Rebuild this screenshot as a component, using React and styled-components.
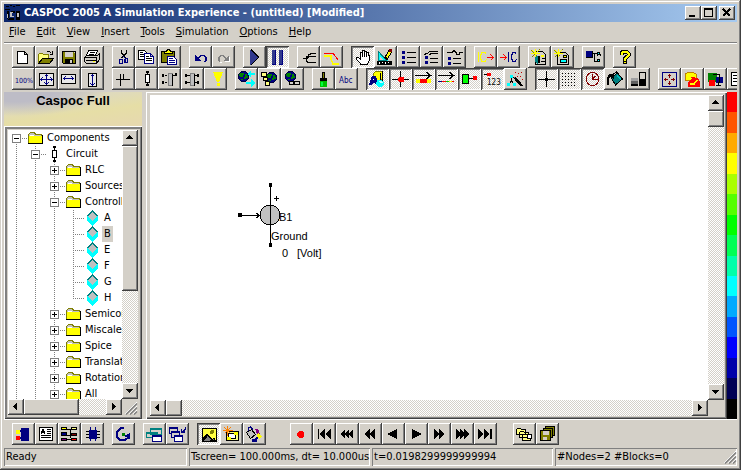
import React, { useState } from 'react';
import styled, { createGlobalStyle, css } from 'styled-components';

const FACE = '#d4d0c8';
const NAVY = '#000080';
const OLIVE = '#808000';
const STEEL = '#30388c';

const GlobalStyle = createGlobalStyle`
  * {
    box-sizing: border-box;
  }
  body {
    margin: 0;
    background: ${FACE};
    color: #000;
    font: 11px/16px 'DejaVu Sans Condensed', 'Liberation Sans', sans-serif;
  }
  button {
    margin: 0;
    padding: 0;
    border: 0;
    background: none;
    color: inherit;
    font: inherit;
  }
`;

const F = ({ c = '#000', d }) => <path d={d} fill={c} />;
const L = ({ c = '#000', d, w = 1, f = 'none' }) => (
  <path d={d} fill={f} stroke={c} strokeWidth={w} />
);
const Globe = ({ x = 4, y = 4 }) => (
  <g transform={`translate(${x} ${y})`}>
    <L c='#000040' f={NAVY} d='M3.5 .5h4l3 3v4l-3 3h-4l-3-3v-4z' />
    <F c='#008000' d='M2 2h4v2h-1v2h-3v-1h-1v-2h1zM7 3h2v2h1v2h-2v1h-2v-2h1zM3 8h2v1h-2z' />
  </g>
);
const Sparks = () => (
  <>
    <L c={OLIVE} d='M3.5 4.5l6 6M11.5 3.5l-8 8' />
    <L c='#ffff00' w={1.4} d='M7.5 3v8M3 7.5h9M4.5 4.5l3 3M10.5 4.5l-3 3' />
  </>
);
const Bullets = () => <F c={NAVY} d='M5 5h3v3h-3zM5 10h3v3h-3zM5 15h3v3h-3z' />;
const Disk = ({ d }) => <L c='#000' f={OLIVE} d={d} />;

// drawn on the 23x22 grid of a toolbar button
const icons = {
  new: <L f='#fff' d='M5.5 5.5h7l3 3v9h-10zM12.5 5.5v3h3' />,
  open: (
    <>
      <L c={OLIVE} f='#ffff80' d='M3.5 17.5v-9l1-1h3l1 1h5v4' />
      <L c='#000' f={OLIVE} d='M3.5 17.5l4-5h11l-4 5z' />
      <L d='M11.5 6.5l1-1h2l2 2M17.5 5v3.5h-3' />
    </>
  ),
  save: (
    <>
      <Disk d='M4.5 5.5h13v12h-12l-1-1z' />
      <F c={FACE} d='M7 6h8v5h-8zM16 6h1v1h-1z' />
      <F d='M7 13h8v4h-8z' />
      <F c={FACE} d='M12 14h2v3h-2z' />
    </>
  ),
  print: (
    <>
      <L f='#fff' d='M7.5 4.5h9l-2 5h-9z' />
      <L d='M9 6.5h5M8 8.5h5' />
      <L f={FACE} d='M3.5 11.5l2-2h11l2-2v6l-3 4h-10l-2-2z' />
      <F d='M3 11h13v1h-13zM5 14h10v1h-10zM15 12h1v6h-1z' />
      <F c='#ffff00' d='M12 15h2v1h-2z' />
    </>
  ),
  cut: (
    <>
      <L d='M9.5 4v3l4 5M14.5 4v3l-5 5' w={1.3} />
      <L c={NAVY} w={1.3} d='M10.5 11.5l1-1 2 2M7.5 13.5h3v4h-3zM13.5 12.5h2v4h-2.5v-3z' />
    </>
  ),
  copy: (
    <>
      <L f='#fff' d='M3.5 4.5h6l2 2v7h-8z' />
      <L d='M5 6.5h3M5 8.5h5M5 10.5h5' />
      <L c={NAVY} f='#fff' d='M9.5 7.5h6l3 3v7h-9zM15.5 7.5v3h3' />
      <L d='M11 10.5h3M11 12.5h6M11 14.5h6' />
    </>
  ),
  paste: (
    <>
      <Disk d='M3.5 5.5h13v11h-13z' />
      <L f='#ffff00' d='M6.5 7.5v-2h2l1-2h2l1 2h2v2z' />
      <L c={NAVY} f='#fff' d='M9.5 10.5h6l3 3v5h-9z' />
      <L c={NAVY} d='M11 12.5h4M11 14.5h6M11 16.5h6' />
    </>
  ),
  undo: (
    <>
      <F c={NAVY} d='M6 9l6 6h-6z' />
      <L c={NAVY} w={1.4} d='M9 12.5l3-3h3l2 2v3l-2 1.5' />
    </>
  ),
  redo: (
    <>
      <F c='#fff' d='M18 10v6h-6z' />
      <L c='#fff' d='M7.5 16.5h2' />
      <F c='#808080' d='M17 9v6h-6z' />
      <L c='#808080' w={1.2} d='M14 12.5l-3-3h-2l-2 2v3l1 1' />
    </>
  ),
  play: (
    <>
      <F c='#000' d='M8 3l8 8-8 8z' />
      <F c={STEEL} d='M7 4l8 7-8 8z' />
    </>
  ),
  pause: (
    <>
      <F c={NAVY} d='M6 4h4v15h-4zM13 4h4v15h-4z' />
      <F c={STEEL} d='M6 4h3v14h-3zM13 4h3v14h-3z' />
    </>
  ),
  wires: (
    <L d='M6 12.5h4l2-4 3-1h4M10 12.5l2-2h7M9.5 10v5l2 1.5h7.5' w={1.2} />
  ),
  limits: (
    <>
      <L c='#ff0000' d='M4 7.5h9l5 6' w={1.2} />
      <L c='#ffff00' w={1.5} d='M4 10h7v3l2 5h6' />
    </>
  ),
  hand: (
    <>
      <L f='#fff' d='M9.5 18.5v-1l-4-4v-2h2l2 2v-7h2v-2h2v1h2v1h2v3h1v5l-2 3v1z' />
      <L d='M11.5 6v5M13.5 5v6M15.5 6v5' />
    </>
  ),
  ruler: (
    <>
      <F c='#000' d='M3 15h15v4h-15z' />
      <F c='#00ffff' d='M4 4l10 11h-10z' />
      <L c='#008080' d='M4.5 5.5v9h8z' />
      <F c={FACE} d='M6 10l3 4h-3z' />
      <F c='#fff' d='M5 16h1v2h-1zM8 16h1v1h-1zM11 16h1v2h-1zM14 16h1v1h-1z' />
      <L c='#000' w={4} d='M11.5 13l5-8' />
      <L c='#ffff00' w={2} d='M12.5 11.5l3.5-5.5' />
      <F c='#800000' d='M15 3h3v3h-3z' />
    </>
  ),
  list: (
    <>
      <Bullets />
      <L d='M10 6.5h9M10 11.5h9M10 16.5h9' />
    </>
  ),
  listScope: (
    <>
      <F c={NAVY} d='M5 10h3v3h-3zM5 15h3v3h-3z' />
      <L d='M4 8.5l3-1 3-2h8M9 8.5l3-1h6M10 12.5h8M10 16.5h8' />
    </>
  ),
  listWave: (
    <>
      <F c={NAVY} d='M5 11h3v3h-3zM5 16h3v3h-3z' />
      <L d='M4 6.5h5l2-2 2 2 1 2h2l1-2h3M10 12.5h8M10 17.5h8' />
    </>
  ),
  icOut: (
    <>
      <L c='#ffff00' d='M4.500 6v10M12.5 8.5l-1.5-2h-3l-1.5 3v3l1.5 3h3l1.5-2' />
      <L c='#ff0000' d='M13 11.5h6M16.5 8.5l3 3-3 3' />
    </>
  ),
  icIn: (
    <>
      <L c='#ff0000' d='M3 11.5h6M6.5 8.5l3 3-3 3' />
      <L c={NAVY} d='M11.5 6v10M19.5 8.5l-1.5-2h-2l-1.5 3v3l1.5 3h2l1.5-2' />
    </>
  ),
  newGlobe: (
    <>
      <L f={FACE} d='M7.5 5.5h7l3 3v10h-10z' />
      <F d='M9 10h3v7h-3zM14 12h3v1h-3zM13 15h4v1h-4z' />
      <F c='#008080' d='M7 10h3v8h-1l-2-3z' />
      <F c='#ffff00' d='M13 9h3v2h-3z' />
      <Sparks />
    </>
  ),
  newDoc: (
    <>
      <L f={FACE} d='M6.5 6.5h8l3 3v9h-11z' />
      <L f='#ffff00' d='M12.5 9.5h3v2h-3z' />
      <L f='#00ffff' d='M9.5 13.5h6v3h-6z' />
      <Sparks />
    </>
  ),
  tree: (
    <>
      <F c='#000' d='M4 5h7v7h-7z' />
      <F c={NAVY} d='M4 5h6v6h-6z' />
      <L d='M11 7.5h4M12.5 8v7h3M15 9.5l2-3 2 3' />
      <L f='#00ffff' d='M15.5 6.5h2v2h-2zM15.5 13.5h2v2h-2z' />
    </>
  ),
  help: (
    <>
      <L w={4} d='M8.5 9v-2l2-1.5h3l2 2v2l-3.500 3v2' />
      <L c='#ffff00' w={2} d='M8.5 9v-2l2-1.5h3l2 2v2l-3.5 3v2' />
      <L f='#ffff00' d='M10.5 15.5h3v2h-3z' />
    </>
  ),
  percent: (
    <text x='3' y='15' fontSize='7' fill={NAVY}>
      100%
    </text>
  ),
  fit: (
    <>
      <L d='M4.5 5.5h14v12h-14z' f='#e8e8e8' />
      <L c={NAVY} d='M6 11.5h11M11.5 7v9M9.5 8.5l2-2 2 2M9.5 14.5l2 2 2-2M7.5 9.5l-2 2 2 2M15.5 9.5l2 2-2 2' />
    </>
  ),
  fitWidth: (
    <>
      <L d='M3.5 6.5h14v9h-14z' f='#e8e8e8' />
      <L c={NAVY} w={1.4} d='M5 10.5h11M7.5 8.5l-2 2 2 2M13.5 8.5l2 2-2 2' />
    </>
  ),
  fitHeight: (
    <>
      <L d='M7.5 5.5h8v13h-8z' f='#e8e8e8' />
      <L c={NAVY} w={1.4} d='M11.5 7v10M9.5 8.5l2-2 2 2M9.5 15.5l2 2 2-2' />
    </>
  ),
  cross: <L d='M4 11.5h14M8.5 6v12M11.5 6v5' w={1.2} />,
  resistor: (
    <>
      <L d='M12.5 3v15' />
      <L f='#fff' d='M10.5 6.5h4v8h-4z' />
      <F d='M11 3h3v2h-3zM11 16h3v2h-3z' />
    </>
  ),
  block: (
    <>
      <F c='#000' d='M4 6h2v3h-2zM4 13h2v3h-2zM7 7h2v1h-2zM7 14h2v1h-2zM15 7h3v1h-3zM17 5h2v3h-2z' />
      <L c='#808080' f='#c0c0c0' d='M10.5 5.5h4v12h-4z' />
      <F d='M14 6h1v12h-1z' />
    </>
  ),
  chip: (
    <>
      <F c='#000' d='M4 6h2v3h-2zM4 13h2v3h-2zM6 7h3v1h-3zM6 14h3v1h-3zM14 7h3v1h-3zM14 14h3v1h-3zM16 6h2v3h-2zM16 13h2v3h-2z' />
      <L c='#808080' f='#c0c0c0' d='M9.5 5.5h4v12h-4z' />
      <F d='M13 6h1v12h-1z' />
    </>
  ),
  probe: <F c='#ffff00' d='M9 4h10l-4 10h-2zM13 15h3v3h-3z' />,
  globeSwap: (
    <>
      <Globe x={3} y={3} />
      <F c='#00ffff' d='M12 6l4-3v2h4v2h-4v2zM20 15l-4-4v3h-5v2h5v3z' />
    </>
  ),
  globeBlocks: (
    <>
      <Globe x={8} y={4} />
      <L f='#ffff80' d='M3.5 4.5h5v4h-5zM5.5 9.5h4v3h-4zM7.5 13.5h4v4h-4z' />
    </>
  ),
  globeLink: (
    <>
      <Globe x={4} y={3} />
      <L f={FACE} w={1.4} d='M8.5 13.5h5v3h-5zM12.5 13.5h6v3h-6z' />
    </>
  ),
  brush: (
    <>
      <F c='#000' d='M10 4h3v6h2v3h-7v-3h2z' />
      <F c={OLIVE} d='M11 5h1v5h-1z' />
      <F c='#00c000' d='M8 13h7v6h-7z' />
      <F c='#00ff40' d='M9 14h2v4h-2z' />
    </>
  ),
  abc: (
    <text x='4' y='15' fontSize='8' fill={NAVY}>
      Abc
    </text>
  ),
  shapes: (
    <>
      <L c={OLIVE} f='#ffff00' d='M7.5 5.5l2-2h7v8l-4 2-5-2z' />
      <F c='#000' d='M16 3h1v11h-1zM14 5h1v7h-1z' />
      <F c={NAVY} d='M3 17l3-9h4l3 9h-3l-1-2h-2l-1 2z' />
      <F c='#fff' d='M7 12l1-2v2z' />
      <F c='#00ffff' d='M11 12h4l3 2v3l-3 2h-2l-3-2z' />
      <F c='#c0ffff' d='M12 13h3l2 2h-3z' />
    </>
  ),
  node: (
    <>
      <L d='M3 11.5h17M11.5 3v16' />
      <F c='#ff0000' d='M10 9h4l1 1v3l-1 1h-4l-1-1v-3z' />
    </>
  ),
  arrowBox: (
    <>
      <L w={1.3} d='M3 7.5h15M14.5 4.5l4 3-4 3' />
      <F c='#ffff00' d='M4 11h15v4h-15z' />
      <F c='#ff0000' d='M8 11h7v4h-7z' />
    </>
  ),
  arrowColors: (
    <>
      <L w={1.3} d='M3 7.5h15M14.5 4.5l4 3-4 3' />
      <F c={NAVY} d='M3 13h4v1h-4z' />
      <F c='#ff0000' d='M7 13h4v1h-4zM17 13h2v1h-2z' />
      <F c='#00c000' d='M11 13h3v1h-3z' />
      <F c='#ffff00' d='M14 13h3v1h-3z' />
    </>
  ),
  port: (
    <>
      <L d='M10 10.5h6' />
      <L f='#00ff00' d='M4.5 6.5h6v9h-6z' />
      <F c='#ff0000' d='M15 8h4v4h-4z' />
    </>
  ),
  numbers: (
    <>
      <L d='M3 6.5h4' />
      <F c='#ff0000' d='M6 5h4v3h-4z' />
      <text x='6' y='17' fontSize='8'>
        123
      </text>
    </>
  ),
  wizard: (
    <>
      <L w={2.5} d='M10 9l8 9' />
      <L c='#808080' d='M10 9l1 1' />
      <L d='M7.5 9v4l-3 4M7.5 13l3 4' />
      <F c='#00ffff' d='M6 7h3v3h-3zM3 15h3v3h-3zM9 15h3v3h-3z' />
      <F c='#c00000' d='M11 4h1v1h-1zM14 5h1v1h-1zM17 4h1v1h-1zM13 8h1v1h-1zM16 8h1v1h-1zM18 11h1v1h-1z' />
    </>
  ),
  crosshair: (
    <>
      <L d='M3 11.5h17M11.5 3v16' />
      <F d='M10 10h3v3h-3z' />
    </>
  ),
  grid: (
    <g>
      {[5, 8, 11, 14, 17].map(y => (
        <F key={y} d={`M4 ${y}h1v1h-1zM7 ${y}h1v1h-1zM10 ${y}h1v1h-1zM13 ${y}h1v1h-1zM16 ${y}h1v1h-1z`} />
      ))}
    </g>
  ),
  clock: (
    <>
      <circle cx='11.5' cy='11' r='6.5' fill='none' stroke='#800000' />
      <L c='#800000' d='M11.5 6v5.5h6M11.5 11l3-3' />
    </>
  ),
  bucket: (
    <>
      <L f='#008080' d='M7.5 10l6-5 5 6-7 6z' />
      <L d='M9.5 11v-5l3-2 2 2' />
      <L w={2.5} d='M9 7.5h-3l-2 3v6' />
      <F c='#00c0c0' d='M12 8l1-1 4 4-1 1z' />
    </>
  ),
  shades: (
    <>
      <F c='#a0a0a0' d='M4 10h7v3h-7z' />
      <F c='#606060' d='M4 13h7v3h-7z' />
      <F c='#000' d='M4 16h7v2h-7z' />
      <L f={FACE} d='M12.5 4.5h6v7h-6z' />
      <F d='M12 11h7v7h-7z' />
    </>
  ),
  zoomFit: (
    <>
      <L c={NAVY} d='M4.5 4.5h14v14h-14z' />
      <L c='#800000' w={1.2} d='M11.5 6v4M11.5 13v4M6 11.5h4M13 11.5h4M10 7.5h3M10 15.5h3M7.5 10v3M15.5 10v3' />
    </>
  ),
  stack: (
    <>
      <L c='#c08000' f='#ffff00' d='M4.5 5.5l3-1h5l3 2v6h-11z' />
      <L c='#ff0000' f='#ff0000' d='M7.5 18.500v-4l5-4-2-1 6 1 2 4v4z' />
      <L c='#ffff00' w={1.5} d='M9 16h4l3-4' />
    </>
  ),
  machine: (
    <>
      <F c='#008000' d='M4 5h9v9h-9z' />
      <F c={NAVY} d='M12 9h7v6h-7z' />
      <circle cx='8' cy='15' r='3.5' fill='#ff0000' />
      <L d='M9 6.5h6v8M12 17.5h5M14.5 14v4' />
    </>
  ),
  page: (
    <>
      <L f='#fff' d='M4.5 4.5h8v13h-8z' />
      <L d='M6 7.5h6M6 10.5h6M6 13.5h6' />
    </>
  ),
  ports: (
    <>
      <F c={NAVY} d='M9 5h8v13h-8zM7 7h3v2h-3zM7 14h3v2h-3z' />
      <F c='#ffff00' d='M4 7h4v4h-4z' />
      <F c='#ff0000' d='M4 13h4v4h-4z' />
    </>
  ),
  report: (
    <>
      <L f='#fff' w={1.4} d='M4.5 4.5h13v13h-13z' />
      <L d='M6 10.5l2-4 2 4M7 9.5h3M12 6.5h4M12 8.5h4M12 10.5h4M6 12.5h10M6 14.5h10' />
    </>
  ),
  diagram: (
    <>
      <L d='M5 6.5h12M12.5 6v9M5 12.5h12M9 16.5h6' />
      <L f='#ffff00' d='M3.5 4.5h5v2h-5z' />
      <L f='#ffff80' d='M13.5 4.5h5v2h-5z' />
      <L f={NAVY} d='M3.5 9.5h5v3h-5z' />
      <L f='#800000' d='M13.5 10.5h5v2h-5z' />
      <L f='#800080' d='M3.5 15.5h5v2h-5z' />
      <L f='#ff0000' d='M13.5 15.5h5v2h-5z' />
    </>
  ),
  ic: (
    <>
      <F c={NAVY} d='M8 7h8v9h-8zM9 4h1v14h-1zM14 4h1v14h-1z' />
      <L d='M5 8.5h3M5 11.5h3M5 14.5h3M16 8.5h3M16 11.5h3M16 14.5h3' />
    </>
  ),
  refresh: (
    <>
      <L c={NAVY} w={2} d='M12 5h-3l-4 4v5l3 3h5l4-3v-2' />
      <F c={NAVY} d='M12 13l6-3v6z' />
      <F c='#008000' d='M10 10h3v3h-3z' />
    </>
  ),
  windowsTeal: (
    <>
      <L c='#008080' f={FACE} d='M7.5 5.5h11v6h-11zM3.5 9.5h11v5h-11z' />
      <F c='#008080' d='M7 5h12v2h-12zM3 9h12v2h-12z' />
      <L c={NAVY} f='#fff' d='M9.5 12.5h9v6h-9z' />
      <F c={NAVY} d='M9 12h10v2h-10z' />
    </>
  ),
  windowsNavy: (
    <>
      <L c={NAVY} f={FACE} d='M3.5 4.5h8v6h-8z' />
      <L c={NAVY} f={FACE} d='M5.5 8.5h8v6h-8z' />
      <L c={NAVY} f='#fff' d='M8.5 12.5h8v6h-8z' />
      <F c={NAVY} d='M3 4h9v2h-9zM5 8h9v2h-9zM8 12h9v2h-9z' />
      <L c={NAVY} d='M19.5 4v2l-3 3M15.5 6v3h3' w={1.3} />
    </>
  ),
  picture: (
    <>
      <L f='#ffff40' d='M5.5 5.5h14v13h-14z' />
      <circle cx='15' cy='9' r='2' fill={OLIVE} />
      <L f='#808080' d='M6 18.5v-3l4-4 5 5 2-1 2 3z' />
      <F d='M6 16l3-3 2 1-5 4zM13 17h6v1h-6z' />
    </>
  ),
  newPicture: (
    <>
      <L f='#ffff80' d='M6.5 8.5h12v9h-12z' />
      <L f='#fff' d='M8.5 10.5h7v5h-7z' />
      <L c='#ff8000' d='M3 7.5h10M7.5 3v10M4.5 4.5l6 6M10.5 4.5l-6 6' />
      <F c='#ffff00' d='M14 9h4v3h-4zM7 14h4v3h-4z' />
    </>
  ),
  paint: (
    <>
      <L c={NAVY} d='M5.5 10v-5l2-1 2 2v3' />
      <L f='#c0c0c0' d='M3.5 9.5l5-3 4 5-5 4z' />
      <F c='#800080' d='M12 6h3l2 5h-3z' />
      <L c={NAVY} w={2} d='M12 17l4-4' />
      <F c='#ffff00' d='M15 10l4 3-3 3-2-3z' />
      <F c={NAVY} d='M9 16h5v3h-5z' />
    </>
  ),
  record: <F c='#ff0000' d='M9 8h3l2 2v3l-2 2h-3l-2-2v-3z' />,
  first: <F d='M5 6h1v10h-1zM12 6v10l-6-5zM18 6v10l-6-5z' />,
  fastBack: <F d='M9 6v10l-5-5zM13 6v10l-5-5zM17 6v10l-5-5z' />,
  back: <F d='M11 6v10l-6-5zM16 6v10l-6-5z' />,
  stepBack: <F d='M15 6v10l-10-5z' />,
  step: <F d='M7 6v10l10-5z' />,
  forward: <F d='M6 6v10l5-5zM11 6v10l5-5z' />,
  fastForward: <F d='M5 6v10l5-5zM9 6v10l5-5zM13 6v10l5-5z' />,
  last: <F d='M4 6v10l6-5zM10 6v10l6-5zM16 6h2v10h-2z' />,
  cascade: (
    <>
      <L f='#ffff80' d='M3.5 6.5l1-1h3l1 1h4v5h-9zM6.5 9.5l1-1h3l1 1h4v5h-9zM9.500 12.5v-1h8v6h-8z' />
      <L f='#fff' d='M14.5 11.5h4v4h-4z' />
    </>
  ),
  saveAll: (
    <>
      <Disk d='M9.5 3.5h9v9h-9z' />
      <Disk d='M7.5 5.5h9v9h-9z' />
      <Disk d='M4.5 7.5h10v10h-10z' />
      <F c={FACE} d='M7 8h6v4h-6zM7 14h4v3h-4z' />
    </>
  ),
};

const toolRows = [
  [
    ['new', 'open', 'save', 'print'],
    ['cut', 'copy', 'paste'],
    ['undo', 'redo'],
    ['play', 'pause'],
    ['wires', 'limits'],
    ['hand', 'ruler', 'list', 'listScope', 'listWave'],
    ['icOut', 'icIn'],
    ['newGlobe', 'newDoc'],
    ['tree'],
    ['help'],
  ],
  [
    ['percent', 'fit', 'fitWidth', 'fitHeight'],
    ['cross', 'resistor', 'block', 'chip', 'probe'],
    ['globeSwap', 'globeBlocks', 'globeLink'],
    ['brush', 'abc'],
    ['shapes', 'node', 'arrowBox', 'arrowColors', 'port', 'numbers', 'wizard'],
    ['crosshair', 'grid', 'clock', 'bucket', 'shades'],
    ['zoomFit', 'stack', 'machine', 'page'],
  ],
];

const bottomTools = [
  ['ports', 'report', 'diagram', 'ic'],
  ['refresh'],
  ['windowsTeal', 'windowsNavy'],
  ['picture', 'newPicture', 'paint'],
];

const playback = ['record', 'first', 'fastBack', 'back', 'stepBack', 'step', 'forward', 'fastForward', 'last'];

const pressed = [
  'pause', 'hand', 'shapes', 'node', 'arrowBox', 'arrowColors', 'port',
  'numbers', 'crosshair', 'grid', 'clock', 'picture',
];

const menus = ['File', 'Edit', 'View', 'Insert', 'Tools', 'Simulation', 'Options', 'Help'];

const palette = [
  '#ff0000', '#ff5500', '#ffaa00', '#ffff00', '#aaff00', '#55ff00', '#00ff00', '#00ff55',
  '#00ffaa', '#00ffff', '#00aaff', '#0055ff', '#0000ff', '#0000aa', '#000055', '#000000',
];

const treeRows = [
  { level: 0, label: 'Components', icon: 'folder', open: true },
  { level: 1, label: 'Circuit', icon: 'circuit', open: true },
  { level: 2, label: 'RLC', icon: 'folder', open: false },
  { level: 2, label: 'Sources', icon: 'folder', open: false },
  { level: 2, label: 'Controll', icon: 'folder', open: true },
  { level: 3, label: 'A', icon: 'part' },
  { level: 3, label: 'B', icon: 'part' },
  { level: 3, label: 'E', icon: 'part' },
  { level: 3, label: 'F', icon: 'part' },
  { level: 3, label: 'G', icon: 'part' },
  { level: 3, label: 'H', icon: 'part', last: true },
  { level: 2, label: 'Semicon', icon: 'folder', open: false },
  { level: 2, label: 'Miscalea', icon: 'folder', open: false },
  { level: 2, label: 'Spice', icon: 'folder', open: false },
  { level: 2, label: 'Translat', icon: 'folder', open: false },
  { level: 2, label: 'Rotation', icon: 'folder', open: false },
  { level: 2, label: 'All', icon: 'folder', open: false },
];

const nodeIcons = {
  folder: (
    <>
      <L f='#c0c0c0' c={OLIVE} d='M1.5 13.5v-9l2-2h4l1 2h6v9z' />
      <F c='#ffff00' d='M2 6h13v7h-13z' />
      <L c='#fff' d='M3 5.5h4' />
      <L d='M1 13.5h14.5v-9' />
    </>
  ),
  circuit: (
    <>
      <L d='M8.5 1v14' />
      <L f='#fff' d='M6.5 4.5h4v7h-4z' />
      <F d='M7 0h3v2h-3zM7 14h3v2h-3z' />
    </>
  ),
  part: (
    <>
      <F c='#00ffff' d='M3 6l5.500-5 5.500 5v4l-5.500 6-5.500-6z' />
      <F c='#c0c0c0' d='M8.5 1l5 5-5 5-5-5z' />
      <L c='#008080' d='M3.5 6l5-5 5 5' />
    </>
  ),
};

function ToolButton({ name }) {
  const down = pressed.includes(name);
  return (
    <Tool type='button' aria-label={name} aria-pressed={down} $down={down}>
      <Icon viewBox='0 0 23 22' aria-hidden='true'>
        {icons[name]}
      </Icon>
    </Tool>
  );
}

function ToolGroups({ groups }) {
  return groups.map(group => (
    <Group key={group[0]}>
      {group.map(name => (
        <ToolButton key={name} name={name} />
      ))}
    </Group>
  ));
}

const arrows = {
  up: 'M4 9h7l-3.5-4z',
  down: 'M4 6h7l-3.5 4z',
  left: 'M9 4v7l-4-3.5z',
  right: 'M6 4v7l4-3.5z',
};

function ScrollBar({ vertical, thumb }) {
  const [back, next] = vertical ? ['up', 'down'] : ['left', 'right'];
  return (
    <Track $vertical={vertical}>
      <ScrollButton type='button' aria-label={`Scroll ${back}`}>
        <Arrow viewBox='0 0 16 16'>
          <F d={arrows[back]} />
        </Arrow>
      </ScrollButton>
      <Thumb $size={thumb} />
      <Spacer />
      <ScrollButton type='button' aria-label={`Scroll ${next}`}>
        <Arrow viewBox='0 0 16 16'>
          <F d={arrows[next]} />
        </Arrow>
      </ScrollButton>
    </Track>
  );
}

function Grip() {
  return (
    <GripBox viewBox='0 0 16 16' aria-hidden='true'>
      <L c='#fff' d='M3 15l12-12M7 15l8-8M11 15l4-4' />
      <L c='#808080' w={1.5} d='M4 15.5l11-11M8 15.5l7-7M12 15.5l3-3' />
    </GripBox>
  );
}

function TreeRow({ row, selected, onSelect }) {
  const { level, label, icon, open, last } = row;
  return (
    <Row role='treeitem' aria-selected={selected}>
      {Array.from({ length: level }, (_, i) => (
        <Guide key={i} $line='full' />
      ))}
      {open === undefined ? (
        <Guide $line={last ? 'end' : 'full'} $branch />
      ) : (
        <Guide $line={level === 0 ? 'start' : 'full'} $branch>
          <Toggle type='button' aria-label={`Toggle ${label}`}>
            <ToggleMark viewBox='0 0 9 9'>
              <L c='#808080' f='#fff' d='M.5 .5h8v8h-8z' />
              <L d={open ? 'M2 4.5h5' : 'M2 4.5h5M4.5 2v5'} />
            </ToggleMark>
          </Toggle>
        </Guide>
      )}
      <NodeIcon viewBox='0 0 18 16' aria-hidden='true'>
        {nodeIcons[icon]}
      </NodeIcon>
      <Label type='button' $selected={selected} onClick={() => onSelect(label)}>
        {label}
      </Label>
    </Row>
  );
}

function Circuit() {
  return (
    <Drawing role='img' aria-label='Voltage source B1'>
      <g shapeRendering='crispEdges'>
        <circle cx='120' cy='120' r='10' fill='#c0c0c0' stroke='#000' />
        <L d='M120.5 90v60M90 120.5h20M106 118l4 2.5-4 2.5M124 103.5h5M126.5 101v5' />
        <F d='M88 118h4v4h-4z' />
        <circle cx='120.5' cy='90' r='2' />
        <circle cx='120.5' cy='150' r='2' />
      </g>
      <text x='129' y='126'>B1</text>
      <text x='121' y='145'>Ground</text>
      <text x='132' y='162'>0</text>
      <text x='147' y='162'>[Volt]</text>
    </Drawing>
  );
}

export default function App() {
  const [selected, setSelected] = useState('B');

  return (
    <>
      <GlobalStyle />
      <Frame>
        <TitleBar>
          <AppIcon viewBox='0 0 18 18' aria-hidden='true'>
            <F d='M2 2h3v1h-3zM6 1h2v1h-2zM9 2h2v1h-2zM12 1h4v1h-4zM1 5h5v1h-5zM3 7h2v8h-2zM7 7h4v2h-4zM12 7h4v9h-6v-2h-6v2h8z' />
            <F c='#c0c0c0' d='M3 10h1v4h-1zM6 8h3v1h-3zM6 8h2v5h-2zM7 12h3v1h-3zM13 9h2v4h-2z' />
          </AppIcon>
          <Title>CASPOC 2005 A Simulation Experience - (untitled) [Modified]</Title>
          <WindowButton type='button' aria-label='Minimize'>
            <WindowMark viewBox='0 0 16 14'>
              <F d='M4 9h6v2h-6z' />
            </WindowMark>
          </WindowButton>
          <WindowButton type='button' aria-label='Maximize'>
            <WindowMark viewBox='0 0 16 14'>
              <L d='M3.5 2.5h8v8h-8zM3 3.5h9' />
            </WindowMark>
          </WindowButton>
          <WindowButton type='button' aria-label='Close' $gap>
            <WindowMark viewBox='0 0 16 14'>
              <L w={1.7} d='M4 3l7 7M11 3l-7 7' />
            </WindowMark>
          </WindowButton>
        </TitleBar>

        <MenuBar>
          {menus.map(menu => (
            <MenuItem key={menu} type='button'>
              <u>{menu[0]}</u>
              {menu.slice(1)}
            </MenuItem>
          ))}
        </MenuBar>

        <ToolBars>
          {toolRows.map((groups, i) => (
            <ToolBar key={i}>
              <ToolGroups groups={groups} />
            </ToolBar>
          ))}
        </ToolBars>

        <Main>
          <SideBar>
            <Banner>Caspoc Full</Banner>
            <TreePane>
              <TreeView role='tree'>
                {treeRows.map(row => (
                  <TreeRow
                    key={row.label}
                    row={row}
                    selected={row.label === selected}
                    onSelect={setSelected}
                  />
                ))}
              </TreeView>
              <ScrollBar vertical thumb={145} />
              <ScrollBar thumb={55} />
              <Grip />
            </TreePane>
          </SideBar>
          <Sheet>
            <Circuit />
            <ScrollBar vertical thumb={16} />
            <ScrollBar thumb={16} />
            <Corner />
          </Sheet>
          <Palette>
            {palette.map(color => (
              <Swatch key={color} $color={color} />
            ))}
          </Palette>
        </Main>

        <BottomBar>
          <ToolGroups groups={bottomTools} />
          <PlayGroup>
            {playback.map(name => (
              <ToolButton key={name} name={name} />
            ))}
          </PlayGroup>
          <Group>
            <ToolButton name='cascade' />
            <ToolButton name='saveAll' />
          </Group>
        </BottomBar>

        <StatusBar>
          <Status>Ready</Status>
          <Status>Tscreen= 100.000ms, dt= 10.000us</Status>
          <Status>t=0.0198299999999994</Status>
          <Status>
            #Nodes=2 #Blocks=0
            <Grip />
          </Status>
        </StatusBar>
      </Frame>
    </>
  );
}

const dither = css`
  background: repeating-conic-gradient(#fff 0 25%, ${FACE} 0 50%) 0 0 / 2px 2px;
`;

const raised = css`
  background: ${FACE};
  box-shadow: inset -1px -1px #404040, inset 1px 1px #fff, inset -2px -2px #808080;
`;

const Frame = styled.div`
  display: flex;
  flex-direction: column;
  height: 100vh;
  min-height: 400px;
  padding: 4px;
  overflow: hidden;
  background: ${FACE};
  box-shadow: inset -1px -1px #404040, inset 1px 1px ${FACE}, inset -2px -2px #808080,
    inset 2px 2px #fff;
`;

const TitleBar = styled.header`
  display: flex;
  align-items: center;
  height: 18px;
  flex: none;
  padding-right: 2px;
  background: linear-gradient(90deg, #0a246a, #a6caf0);
`;

const AppIcon = styled.svg`
  width: 18px;
  height: 18px;
  margin-right: 2px;
  shape-rendering: crispEdges;
`;

const Title = styled.h1`
  flex: 1;
  margin: 0;
  color: #fff;
  font-size: 11px;
  line-height: 18px;
  white-space: nowrap;
`;

const WindowButton = styled.button`
  width: 16px;
  height: 14px;
  margin-left: ${props => (props.$gap ? '2px' : '0')};
  ${raised}
`;

const WindowMark = styled.svg`
  display: block;
  width: 16px;
  height: 14px;
  shape-rendering: crispEdges;
`;

const MenuBar = styled.nav`
  display: flex;
  flex: none;
  gap: 1px;
  height: 22px;
  border-bottom: 1px solid #fff;
  box-shadow: inset 0 -1px #808080;
`;

const MenuItem = styled.button`
  height: 20px;
  padding: 0 5px;
`;

const ToolBars = styled.div`
  flex: none;
  padding: 2px 0 2px 8px;
  overflow: hidden;
`;

const ToolBar = styled.div`
  display: flex;
  gap: 8px;
`;

const Group = styled.div`
  display: flex;
  flex: none;
`;

const Tool = styled.button`
  width: 23px;
  height: 22px;
  flex: none;
  ${raised}
  ${props =>
    props.$down &&
    css`
      ${dither}
      box-shadow: inset 1px 1px #404040, inset -1px -1px #fff, inset 2px 2px #808080;
    `}
`;

const Icon = styled.svg`
  display: block;
  width: 23px;
  height: 22px;
  shape-rendering: crispEdges;
`;

const Main = styled.main`
  display: flex;
  flex: 1;
  min-height: 0;
`;

const SideBar = styled.aside`
  display: flex;
  flex-direction: column;
  flex: none;
  width: 138px;
  margin-right: 4px;
`;

const Banner = styled.div`
  height: 34px;
  flex: none;
  background: radial-gradient(ellipse at 10% 0, #bdbcc6 0 20%, transparent 50%),
    linear-gradient(172deg, #c9c8c8 0, #dfdabd 30%, #e6dea6 60%, #e6d8b0 100%);
  font: bold 13px/18px 'Liberation Sans', Arial, sans-serif;
  text-align: center;
`;

const TreePane = styled.div`
  display: grid;
  grid-template: 1fr 16px / 1fr 16px;
  flex: 1;
  min-height: 0;
  padding: 4px;
  box-shadow: inset 1px 1px #fff, inset -1px -1px #404040, inset -2px -2px #808080,
    inset 3px 3px #808080;
`;

const TreeView = styled.div`
  overflow: hidden;
  background: #fff;
`;

const Row = styled.div`
  display: flex;
  height: 16px;
  white-space: nowrap;
`;

const dots = '#808080 0 1px, transparent 1px 2px';

const Guide = styled.span`
  display: flex;
  align-items: center;
  flex: none;
  width: 19px;
  background-image: repeating-linear-gradient(${dots}),
    repeating-linear-gradient(90deg, ${dots});
  background-repeat: no-repeat;
  background-position: 8px ${props => (props.$line === 'start' ? '8px' : '0')}, 8px 8px;
  background-size: 1px ${props => (props.$line === 'end' ? '8px' : '16px')},
    ${props => (props.$branch ? '11px 1px' : '0 0')};
`;

const Toggle = styled.button`
  width: 9px;
  height: 9px;
  margin-left: 4px;
`;

const ToggleMark = styled.svg`
  display: block;
  width: 9px;
  height: 9px;
  shape-rendering: crispEdges;
`;

const NodeIcon = styled.svg`
  flex: none;
  width: 18px;
  height: 16px;
  shape-rendering: crispEdges;
`;

const Label = styled.button`
  padding: 0 2px;
  background: ${props => (props.$selected ? FACE : 'none')};
`;

const Track = styled.div`
  display: flex;
  flex-direction: ${props => (props.$vertical ? 'column' : 'row')};
  min-width: 0;
  min-height: 0;
  ${dither}
`;

const ScrollButton = styled.button`
  width: 16px;
  height: 16px;
  flex: none;
  ${raised}
`;

const Arrow = styled.svg`
  display: block;
  width: 16px;
  height: 16px;
  shape-rendering: crispEdges;
`;

const Thumb = styled.div`
  flex: 0 1 ${props => props.$size}px;
  ${raised}
`;

const Spacer = styled.div`
  flex: 1;
`;

const GripBox = styled.svg`
  width: 16px;
  height: 16px;
  flex: none;
`;

const Sheet = styled.section`
  display: grid;
  grid-template: 1fr 16px / 1fr 16px;
  flex: 1;
  min-width: 0;
  padding: 3px 3px 3px 4px;
  box-shadow: inset 1px 1px #fff, inset -1px -1px #404040, inset -2px -2px #808080;
`;

const Drawing = styled.svg`
  width: 100%;
  height: 100%;
  min-height: 0;
  background: #fff;
  font: 11px 'Liberation Sans', Arial, sans-serif;
`;

const Corner = styled.div`
  background: ${FACE};
`;

const Palette = styled.div`
  display: flex;
  flex-direction: column;
  flex: none;
  width: 10px;
`;

const Swatch = styled.span`
  flex: 1;
  background: ${props => props.$color};
`;

const BottomBar = styled.footer`
  display: flex;
  flex: none;
  gap: 8px;
  padding: 3px 8px;
  border-top: 1px solid #fff;
`;

const PlayGroup = styled(Group)`
  margin: 0 8px 0 16px;
`;

const StatusBar = styled.div`
  display: grid;
  grid-template-columns: 183px 181px 181px 1fr;
  gap: 2px;
  flex: none;
  height: 18px;
`;

const Status = styled.div`
  display: flex;
  justify-content: space-between;
  padding: 0 0 0 2px;
  line-height: 18px;
  white-space: nowrap;
  box-shadow: inset 1px 1px #808080, inset -1px -1px #fff;
`;
